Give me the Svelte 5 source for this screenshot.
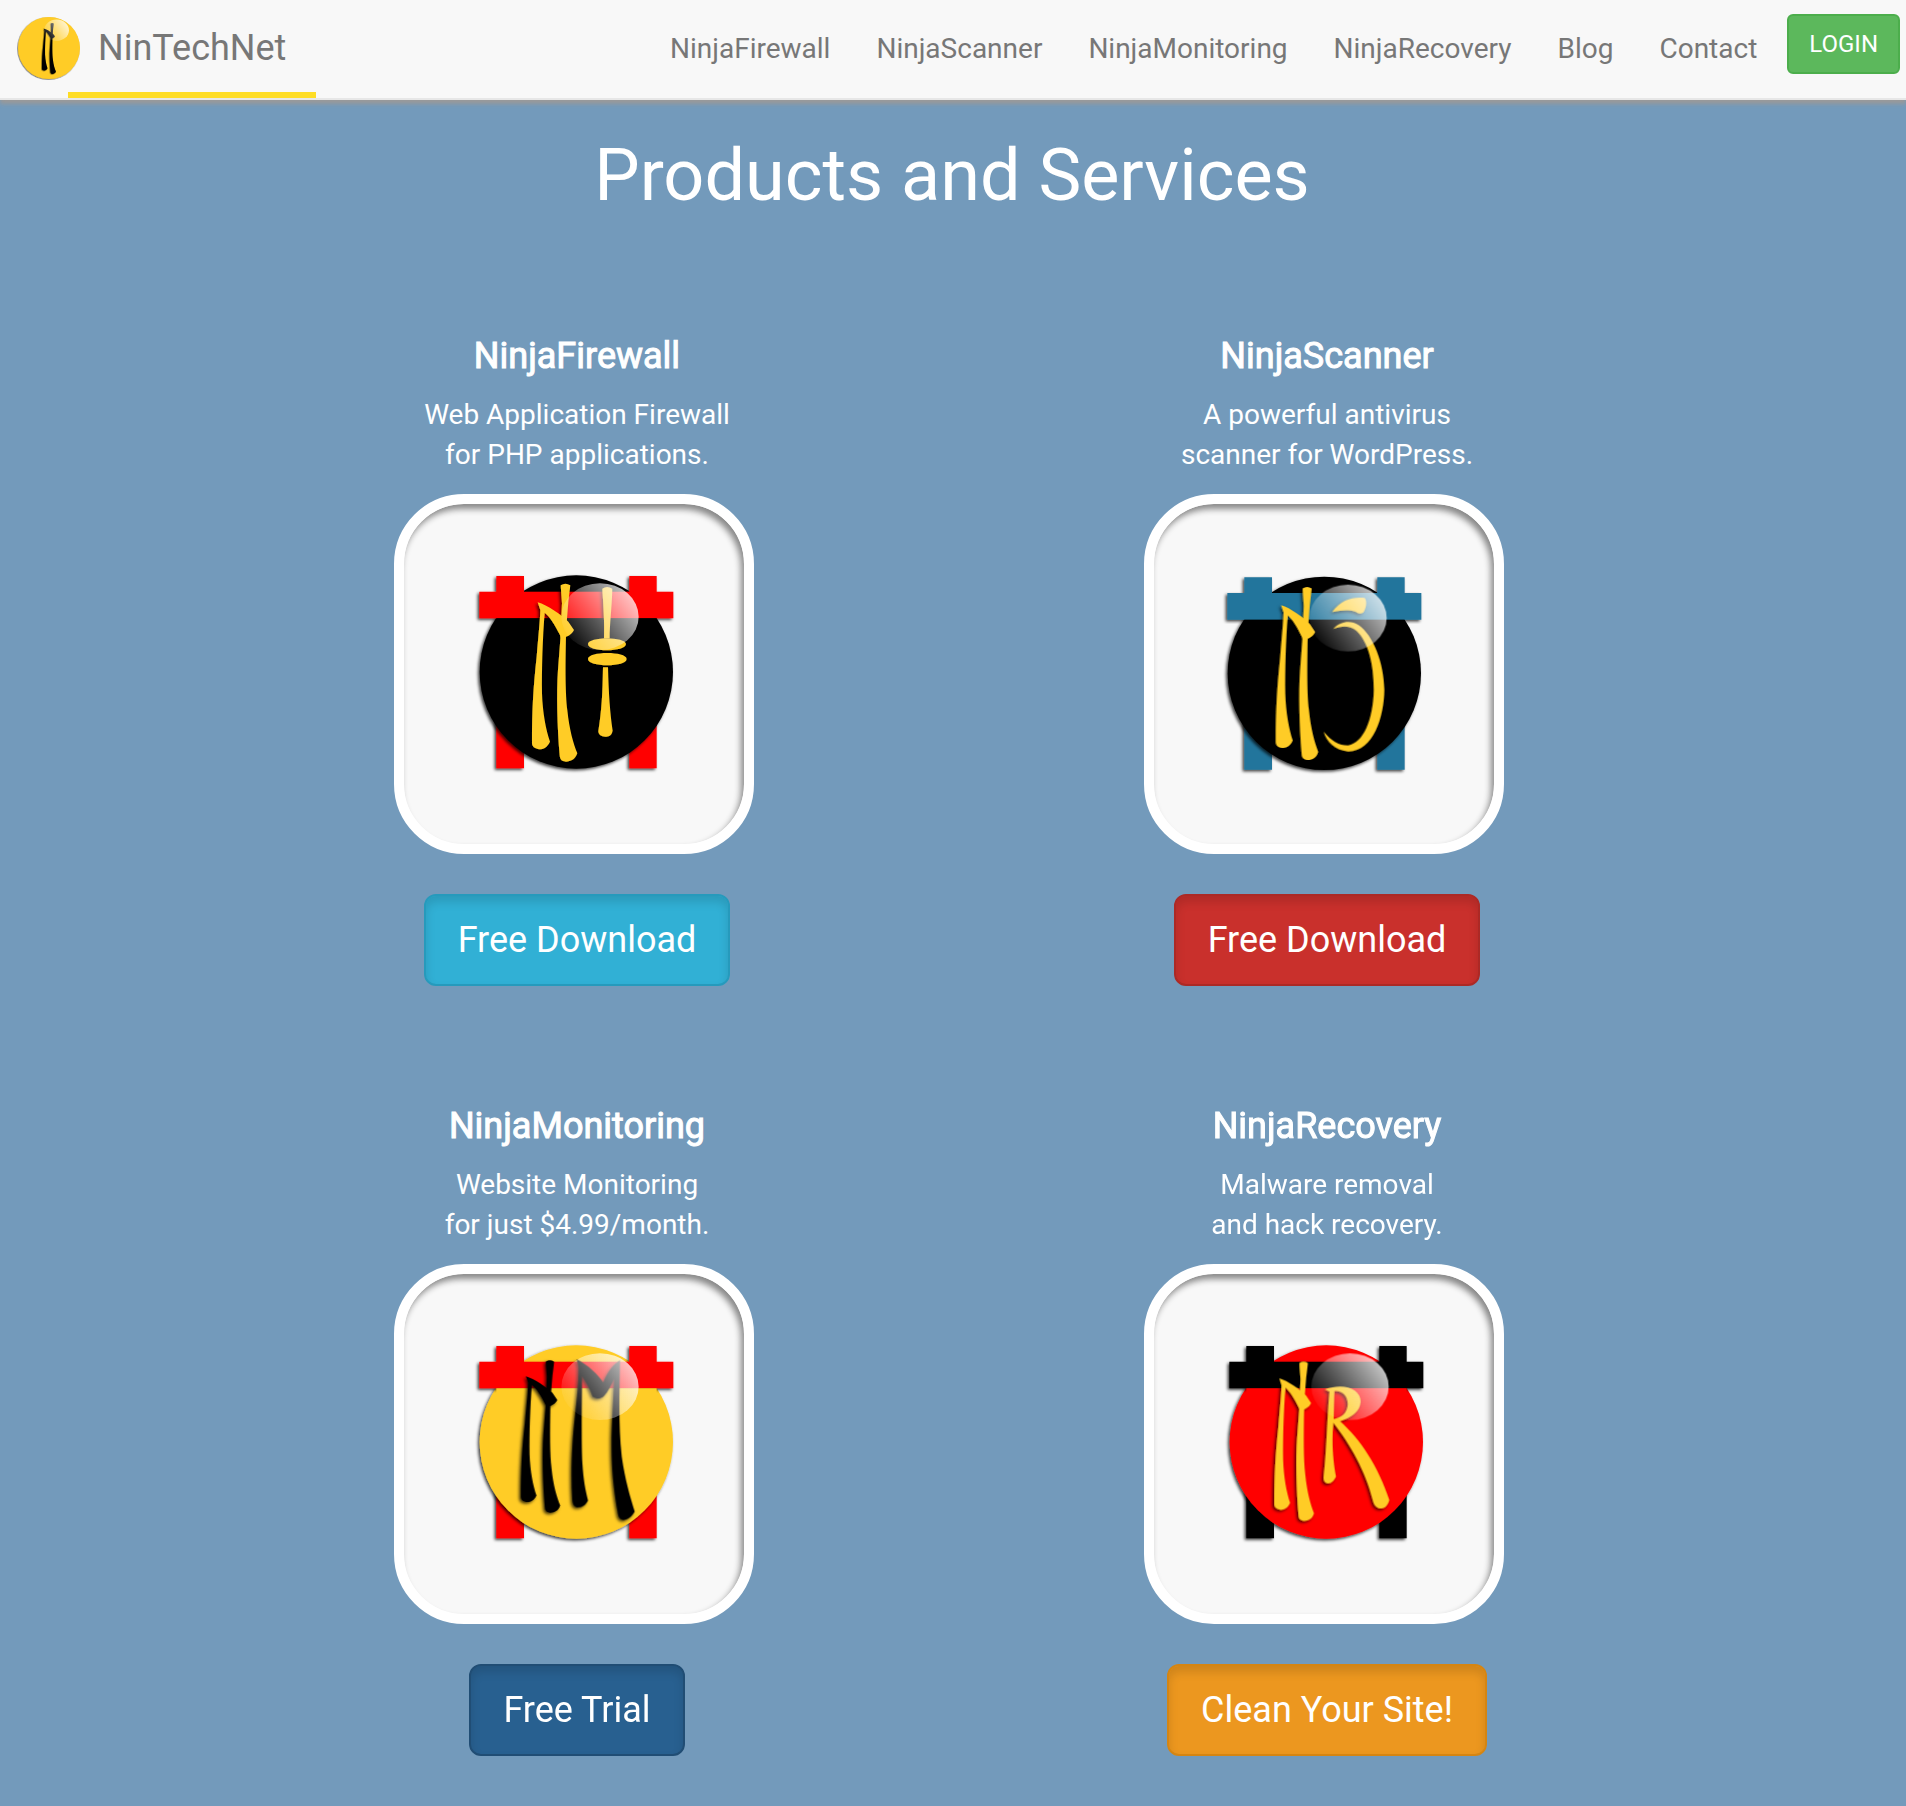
<script>
  const links = ['NinjaFirewall', 'NinjaScanner', 'NinjaMonitoring', 'NinjaRecovery', 'Blog', 'Contact'];

  const products = [
    {
      id: 'nf',
      name: 'NinjaFirewall',
      text: ['Web Application Firewall', 'for PHP applications.'],
      button: 'Free Download',
      style: 'info',
      gate: '#ff0000',
      disc: '#000000',
      ink: '#ffcc26',
      n: 'translate(0 0)',
      letter:
        'M427 86Q441 76 457 86C455 150 449 190 449 236H432C434 190 430 130 427 86Z' +
        'M384 252C384 230 498 230 498 252C498 277 384 277 384 252Z' +
        'M384 297C384 273 500 273 500 297C500 322 384 322 384 297Z' +
        'M429 322H444C446 400 450 460 458 512C455 528 445 530 436 530C424 530 416 524 415 514C425 450 428 400 429 322Z'
    },
    {
      id: 'ns',
      name: 'NinjaScanner',
      text: ['A powerful antivirus', 'scanner for WordPress.'],
      button: 'Free Download',
      style: 'danger',
      gate: '#22759c',
      disc: '#000000',
      ink: '#ffcc26',
      n: 'translate(-4 12) scale(0.934 0.972)',
      shift: 'translate(-6 4)',
      letter:
        'M367 156C395 118 430 110 464 114C471 122 470 142 460 157C450 162 445 160 438 155C415 148 395 150 367 156Z' +
        'M370 207C395 180 425 182 445 195C490 225 522 310 523 390C522 470 490 574 415 574C375 570 350 545 341 515C365 545 390 557 415 556C460 550 490 480 492 390C492 310 475 245 440 212C420 196 395 196 370 207Z'
    },
    {
      id: 'nm',
      name: 'NinjaMonitoring',
      text: ['Website Monitoring', 'for just $4.99/month.'],
      button: 'Free Trial',
      style: 'primary',
      gate: '#ff0000',
      disc: '#ffcc26',
      ink: '#000000',
      n: 'translate(-5 30) scale(0.868 0.856)',
      letter:
        'M350 88C385 105 415 135 430 158C445 120 460 105 480 90C478 200 475 290 485 380C495 450 510 500 524 545C515 560 505 568 490 570C478 568 475 560 473 545C455 440 455 380 455 320C458 240 461 190 463 145C453 165 445 185 430 200C418 208 408 206 398 200C390 175 378 155 366 138C366 200 363 330 367 400C370 450 376 480 384 512C375 528 365 532 352 532C342 530 338 522 337 508C332 420 337 330 345 260C352 200 357 140 356 110Z'
    },
    {
      id: 'nr',
      name: 'NinjaRecovery',
      text: ['Malware removal', 'and hack recovery.'],
      button: 'Clean Your Site!',
      style: 'warning',
      gate: '#000000',
      disc: '#ff0000',
      ink: '#ffcc26',
      n: 'translate(4 31) scale(0.875 0.895)',
      letter:
        'M345 178C400 158 452 175 452 215C450 245 425 262 390 274C450 325 505 410 538 510C532 530 522 535 510 535C498 533 492 525 488 508C470 430 420 340 370 278C364 340 370 400 378 440C370 456 362 460 354 460C344 458 341 452 341 442C350 370 352 250 359 185Z' +
        'M373 183C395 180 413 195 414 222C412 250 395 262 371 267Z'
    }
  ];
</script>

{#snippet nGlyph()}
  <path d="M233 127C262 135 305 165 325 185L342 210C335 225 318 232 303 235L300 225C285 195 270 170 254 158C248 230 245 330 246 400C248 460 258 510 270 545C262 562 250 568 238 568C226 566 217 562 216 550C216 450 220 380 230 290C236 220 240 180 241 150Z" />
  <path d="M302 76Q316 66 331 76L325 125L320 188L304 170L306 130Z" />
  <path d="M302 226L318 224C316 330 316 400 322 450C328 510 340 550 352 580C345 600 332 604 318 605C304 603 300 598 299 585C292 500 289 400 294 330Z" />
{/snippet}

{#snippet effects(id)}
  <defs>
    <linearGradient id="gloss-{id}" x1="0.1" y1="0.85" x2="0.95" y2="0.3">
      <stop offset="0" stop-color="#fff" stop-opacity="0.04" />
      <stop offset="0.45" stop-color="#fff" stop-opacity="0.35" />
      <stop offset="1" stop-color="#fff" stop-opacity="0.75" />
    </linearGradient>
    <filter id="shadow-{id}" x="-10%" y="-10%" width="120%" height="120%">
      <feDropShadow dx="-5" dy="5" stdDeviation="5" flood-color="#000" flood-opacity="0.75" />
    </filter>
  </defs>
{/snippet}

<nav class="navbar">
  <a class="brand" href="#home">
    <svg class="logo" viewBox="59 46 580 580" aria-hidden="true">
      {@render effects('logo')}
      <circle cx="349" cy="336" r="290" fill="#ffcc26" filter="url(#shadow-logo)" />
      <g transform="translate(76 40) scale(0.96 0.89)" filter="url(#shadow-logo)">{@render nGlyph()}</g>
      <ellipse cx="420" cy="170" rx="116" ry="100" fill="url(#gloss-logo)" />
    </svg>
    <span>NinTechNet</span>
  </a>
  <ul class="links">
    {#each links as link}
      <li><a href="#{link.toLowerCase()}">{link}</a></li>
    {/each}
  </ul>
  <button class="login" type="button">LOGIN</button>
</nav>

<main>
  <h1>Products and Services</h1>

  <div class="products">
    {#each products as product}
      <article>
        <h3>{product.name}</h3>
        <p>{product.text[0]}<br />{product.text[1]}</p>
        <div class="tile">
          <svg viewBox="0 0 690 690" role="img" aria-label={product.name}>
            {@render effects(product.id)}
            <g transform={product.shift}>
              <path d="M109 480H192V625H109ZM508 480H590V625H508Z" fill={product.gate} filter="url(#shadow-{product.id})" />
              <circle cx="349" cy="336" r="290" fill={product.disc} filter="url(#shadow-{product.id})" />
              <path
                d="M109 48H192V95H508V48H590V95H640V175H58V95H109Z"
                fill={product.gate}
                filter="url(#shadow-{product.id})"
              />
              <path d="M109 175H590V195H109Z" fill={product.disc} />
            </g>
            <g fill={product.ink} fill-rule="evenodd" filter="url(#shadow-{product.id})">
              <g transform={product.n}>{@render nGlyph()}</g>
              <path d={product.letter} />
            </g>
            <ellipse cx="420" cy="170" rx="116" ry="100" fill="url(#gloss-{product.id})" transform={product.shift} />
          </svg>
        </div>
        <button class="btn {product.style}" type="button">{product.button}</button>
      </article>
    {/each}
  </div>
</main>

<style>
  :global(body) {
    margin: 0;
    background: #739abb;
    font-family: Roboto, sans-serif;
  }

  .navbar {
    position: relative;
    display: flex;
    align-items: flex-start;
    min-height: 98px;
    padding-right: 6px;
    background: #f8f8f8;
    border-bottom: 2px solid #e7e7e7;
    box-shadow: 0 4px 4px #999;
  }

  .brand {
    position: relative;
    display: flex;
    align-items: center;
    gap: 18px;
    height: 98px;
    margin-right: auto;
    padding: 0 30px 2px 18px;
    box-sizing: border-box;
    color: #777;
    font-size: 36px;
    line-height: 40px;
    text-decoration: none;
  }

  .brand::after {
    content: '';
    position: absolute;
    left: 68px;
    right: 0;
    bottom: 0;
    height: 6px;
    background: #fedd26;
  }

  .logo {
    width: 62px;
    height: 62px;
    overflow: visible;
  }

  .links {
    display: flex;
    gap: 46px;
    margin: 0;
    padding: 29px 30px 0 0;
    list-style: none;
  }

  .links a {
    display: block;
    color: #777;
    font-size: 28px;
    line-height: 40px;
    text-decoration: none;
  }

  button {
    border: 2px solid;
    color: #fff;
    font-family: inherit;
    cursor: pointer;
  }

  .login {
    margin-top: 14px;
    padding: 8px 20px;
    background: #5cb85c;
    border-color: #4cae4c;
    border-radius: 6px;
    font-size: 24px;
    line-height: 40px;
  }

  main {
    padding: 36px 2px 50px 0;
    color: #fff;
    text-align: center;
  }

  h1 {
    margin: 0 0 120px;
    font-size: 72px;
    font-weight: 400;
    line-height: 80px;
  }

  .products {
    display: grid;
    grid-template-columns: 1fr 1fr;
    row-gap: 120px;
    max-width: 1500px;
    margin: 0 auto;
  }

  article {
    display: flex;
    flex-direction: column;
    align-items: center;
  }

  h3 {
    margin: 0 0 19px;
    font-size: 36px;
    font-weight: 400;
    line-height: 40px;
    -webkit-text-stroke: 1px #fff;
  }

  p {
    margin: 0 0 19px;
    font-size: 28px;
    line-height: 40px;
  }

  .tile {
    display: flex;
    align-items: center;
    justify-content: center;
    width: 340px;
    height: 340px;
    margin: 0 6px 40px 0;
    background: #f8f8f8;
    border: 10px solid #fff;
    border-radius: 70px;
    box-shadow: inset -3px 5px 6px #888;
  }

  .tile svg {
    width: 230px;
    height: 230px;
    margin: 2px 0 0 2px;
  }

  .btn {
    padding: 20px 32px;
    border-radius: 12px;
    box-shadow: inset 0 6px 10px rgba(0, 0, 0, 0.125);
    font-size: 36px;
    line-height: 48px;
  }

  .info {
    background: #31b0d5;
    border-color: #269abc;
  }

  .danger {
    background: #c9302c;
    border-color: #ac2925;
  }

  .primary {
    background: #286090;
    border-color: #204d74;
  }

  .warning {
    background: #ec971f;
    border-color: #d58512;
  }
</style>
